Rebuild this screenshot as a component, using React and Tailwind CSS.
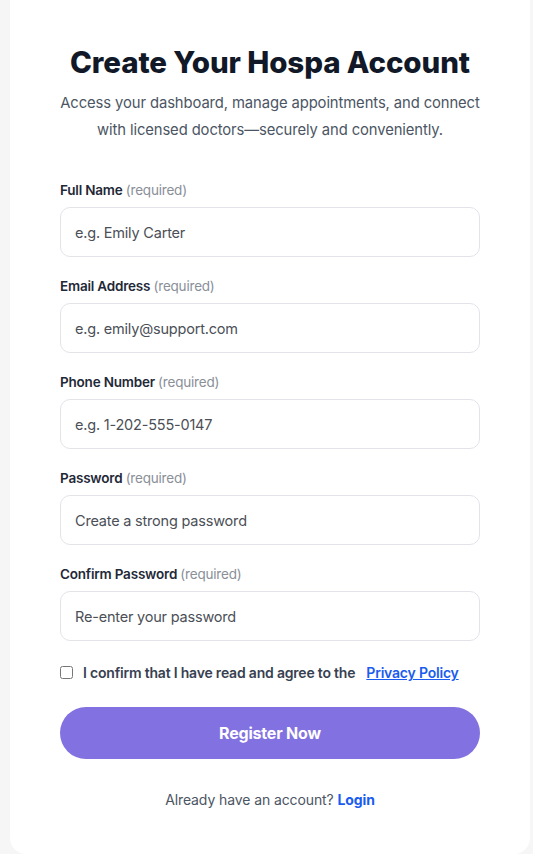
import { useState } from 'react';

const fields = [
  { label: 'Full Name', placeholder: 'e.g. Emily Carter', type: 'text' },
  { label: 'Email Address', placeholder: 'e.g. emily@support.com', type: 'email' },
  { label: 'Phone Number', placeholder: 'e.g. 1-202-555-0147', type: 'tel' },
  { label: 'Password', placeholder: 'Create a strong password', type: 'password' },
  { label: 'Confirm Password', placeholder: 'Re-enter your password', type: 'password' },
];

export default function App() {
  const [agree, setAgree] = useState(false);

  return (
    <div className="min-h-screen bg-[#f6f6f6] pl-[10px] pr-[3px] font-['Inter',sans-serif]">
      <div className="bg-white rounded-b-2xl px-[50px] pt-[44px] pb-[44px] min-h-[853px]">
        {/* Header */}
        <h1 className="text-center text-[29.5px] leading-[36px] font-extrabold text-[#111827] tracking-[-0.1px]">
          Create Your Hospa Account
        </h1>
        <p className="mt-[10px] text-center text-[14.8px] leading-[27px] text-[#4b5563] tracking-[-0.1px]">
          Access your dashboard, manage appointments, and connect with licensed doctors—securely and conveniently.
        </p>

        {/* Form */}
        <form className="mt-[36px] flex flex-col gap-[19px]" onSubmit={(e) => e.preventDefault()}>
          {fields.map((f) => (
            <div key={f.label}>
              <label className="block text-[13.5px] leading-[20px] font-semibold text-[#1f2937] mb-[7px] tracking-[-0.2px]">
                {f.label} <span className="font-normal text-[#8a8f98]">(required)</span>
              </label>
              <input
                type={f.type}
                placeholder={f.placeholder}
                className="w-full h-[50px] rounded-[10px] border border-[#e3e4ea] px-[14px] text-[14.5px] text-[#1f2937] placeholder:text-[#4b4f57] focus:outline-none tracking-[-0.2px]"
              />
            </div>
          ))}

          <label className="flex items-center mt-[2px] text-[14px] font-semibold text-[#374151] tracking-[-0.2px]">
            <input
              type="checkbox"
              checked={agree}
              onChange={(e) => setAgree(e.target.checked)}
              className="w-[13px] h-[13px] mr-[10px]"
            />
            I confirm that I have read and agree to the
            <a href="#" className="ml-[11px] text-[#1a5cf0] underline">Privacy Policy</a>
          </label>

          <button
            type="submit"
            className="mt-[5px] h-[52px] w-full rounded-full bg-[#8271e0] text-white text-[16px] font-bold tracking-[-0.2px]"
          >
            Register Now
          </button>
        </form>

        <p className="mt-[30px] text-center text-[14px] text-[#4b5563] tracking-[-0.1px]">
          Already have an account? <a href="#" className="font-bold text-[#1a5cf0]">Login</a>
        </p>
      </div>
    </div>
  );
}
